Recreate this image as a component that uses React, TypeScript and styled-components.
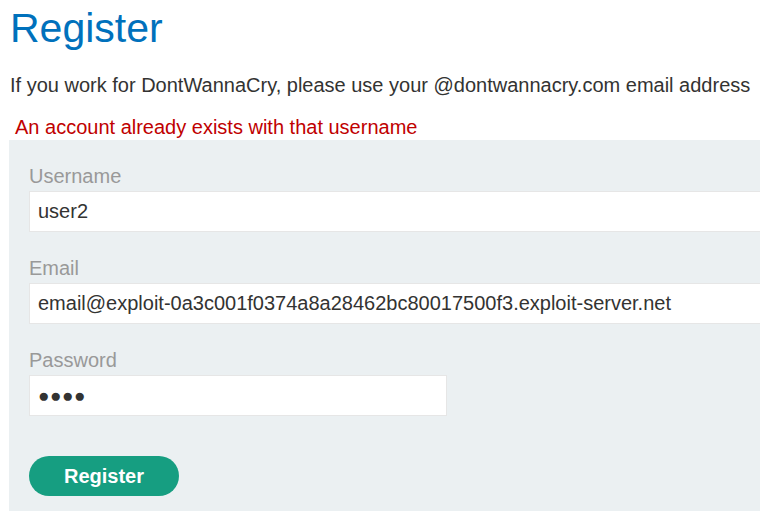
import React from "react";
import styled, { createGlobalStyle } from "styled-components";

const Global = createGlobalStyle`
  html, body { margin: 0; padding: 0; background: #fff; }
  body { font-family: "Liberation Sans", Arial, sans-serif; color: #333332; overflow: hidden; }
  * { box-sizing: border-box; }
`;

const Page = styled.div`
  padding: 0 0 0 9px;
  width: 760px;
`;

const Title = styled.h1`
  margin: 0;
  padding: 3px 0 0 1px;
  font-size: 41px;
  font-weight: normal;
  line-height: 50px;
  color: #0071bc;
`;

const Intro = styled.p`
  margin: 20px 0 0 1px;
  font-size: 20px;
  line-height: 24px;
  color: #333332;
  white-space: nowrap;
`;

const ErrorText = styled.p`
  margin: 18px 0 0 6px;
  font-size: 20px;
  line-height: 24px;
  color: #c00000;
`;

const Form = styled.form`
  margin-top: 1px;
  background: #ebf0f2;
  padding: 24px 0 20px 20px;
  display: flex;
  flex-direction: column;
`;

const Label = styled.label<{ $first?: boolean }>`
  font-size: 20px;
  line-height: 24px;
  color: #999;
  margin-bottom: 3px;
  margin-top: ${(p) => (p.$first ? "0" : "24px")};
`;

const Input = styled.div<{ $w?: string }>`
  width: ${(p) => p.$w || "760px"};
  height: 41px;
  background: #fff;
  border: 1px solid #e6e6e6;
  padding: 0 0 0 8px;
  display: flex;
  align-items: center;
  font-size: 20px;
  color: #333332;
  white-space: nowrap;
`;

const Dots = styled.span`
  font-size: 19px;
  letter-spacing: 0.5px;
  color: #333332;
`;

const Button = styled.button`
  margin-top: 40px;
  width: 150px;
  height: 40px;
  border: none;
  border-radius: 20px;
  background: #169e81;
  color: #fff;
  font-family: "Liberation Sans", Arial, sans-serif;
  font-weight: bold;
  font-size: 20px;
  padding: 0;
`;

export default function App() {
  return (
    <Page>
      <Global />
      <Title>Register</Title>
      <Intro>If you work for DontWannaCry, please use your @dontwannacry.com email address</Intro>
      <ErrorText>An account already exists with that username</ErrorText>
      <Form onSubmit={(e) => e.preventDefault()}>
        <Label $first>Username</Label>
        <Input>user2</Input>
        <Label>Email</Label>
        <Input>email@exploit-0a3c001f0374a8a28462bc80017500f3.exploit-server.net</Input>
        <Label>Password</Label>
        <Input $w="418px">
          <Dots>●●●●</Dots>
        </Input>
        <Button type="button">Register</Button>
      </Form>
    </Page>
  );
}
